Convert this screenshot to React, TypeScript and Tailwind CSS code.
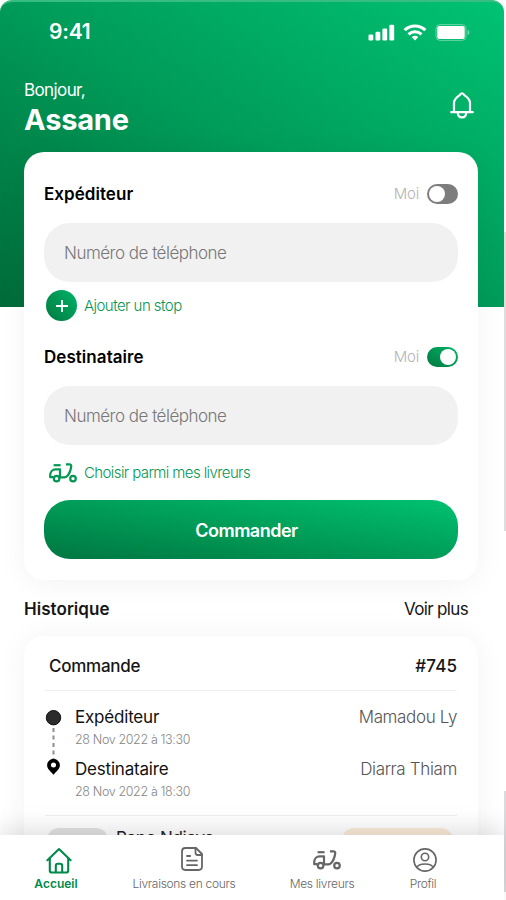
import { useState } from 'react';

type IconProps = { className?: string };

function ScooterIcon({ className }: IconProps) {
  return (
    <svg viewBox="0 0 28 20" fill="none" stroke="currentColor" strokeWidth="2.2" className={className}>
      <path d="M4.6 2.2h7" />
      <path d="M11 14.6V6.4H6.6C3.4 6.4 1.2 9 1.2 12.4v1.8h3" strokeLinejoin="round" />
      <path d="M17 1.3h3.4c1.4 0 2 .9 1.8 2.2-.5 3.4-1.8 7.2-4 9.6-.9 1-1.8 1.3-2.8 1.3H11" />
      <circle cx="7.6" cy="15.6" r="2.8" />
      <circle cx="24" cy="15.6" r="2.8" />
    </svg>
  );
}

function BellIcon({ className }: IconProps) {
  return (
    <svg viewBox="0 0 24 27" fill="none" stroke="currentColor" strokeWidth="2.2" className={className}>
      <path d="M1.2 20.2h21.6" strokeLinecap="round" />
      <path d="M4 20v-9c0-3.8 2.6-5.8 5.7-7.8.5-1.4 1.2-1.9 2.3-1.9s1.800.5 2.3 1.900C17.400 5.200 20 7.200 20 11v9" />
      <path d="M7.800 20.500c0 2.900 1.700 4.900 4.200 4.900s4.200-2 4.200-4.900" />
    </svg>
  );
}

function HomeIcon({ className }: IconProps) {
  return (
    <svg viewBox="0 0 26 27" fill="none" stroke="currentColor" strokeWidth="2.1" strokeLinecap="round" strokeLinejoin="round" className={className}>
      <path d="M1.400 13.200 13 2l11.600 11.200" />
      <path d="M3.800 11.200v12.200c0 1.300.8 2.100 2.100 2.100h14.200c1.300 0 2.100-.8 2.100-2.100V11.200" />
      <path d="M9.800 25.200v-6.400c0-1.200.8-2 2-2h2.400c1.200 0 2 .8 2 2v6.400" />
    </svg>
  );
}

function DocumentIcon({ className }: IconProps) {
  return (
    <svg viewBox="0 0 22 24" fill="none" stroke="currentColor" strokeWidth="1.8" strokeLinecap="round" strokeLinejoin="round" className={className}>
      <path d="M15 1H4.400C2.300 1 1 2.300 1 4.400v15.200C1 21.700 2.300 23 4.400 23h13.200c2.100 0 3.400-1.300 3.400-3.400V7z" />
      <path d="M14.500 1v4.800c0 1.400.8 2.200 2.200 2.200H21" />
      <path d="M6 9h3.200M6 13.600h10M6 18.200h10" />
    </svg>
  );
}

function ProfileIcon({ className }: IconProps) {
  return (
    <svg viewBox="0 0 24 24" fill="none" stroke="currentColor" strokeWidth="1.6" className={className}>
      <circle cx="12" cy="12" r="11.100" />
      <circle cx="12" cy="9" r="3.700" />
      <path d="M4.200 19.400c.6-2.300 3.600-3.400 7.800-3.400s7.200 1.100 7.800 3.400" />
    </svg>
  );
}

function StatusBar() {
  return (
    <div className="flex h-8 items-center justify-between pl-[49px] pr-[34px]">
      <span className="text-[21px] font-semibold tracking-[-0.2px]">9:41</span>
      <div className="flex items-center">
        <svg viewBox="0 0 27 17" fill="currentColor" className="h-[17px] w-[27px]">
          <rect x="0.5" y="10.5" width="4.8" height="6" rx="1.3" />
          <rect x="7.5" y="7.8" width="4.8" height="8.7" rx="1.3" />
          <rect x="14.4" y="4.5" width="4.8" height="12" rx="1.3" />
          <rect x="21.4" y="0.8" width="4.8" height="15.7" rx="1.3" />
        </svg>
        <svg viewBox="0 0 24 17" fill="none" stroke="currentColor" strokeWidth="3" className="ml-2 h-[17px] w-6">
          <path d="M1.6 6.2c5.900-5.600 14.900-5.600 20.800 0" />
          <path d="M5.500 10.300c3.700-3.500 9.300-3.500 13 0" />
          <path d="M12 16.400 8.700 13c1.800-1.700 4.800-1.700 6.600 0z" fill="currentColor" stroke="none" />
        </svg>
        <svg viewBox="0 0 35 17" className="ml-2 h-[17px] w-[35px]">
          <rect x="1" y="0.6" width="30" height="15.8" rx="4" fill="none" stroke="white" strokeOpacity="0.4" />
          <rect x="2.300" y="2" width="27.400" height="13" rx="2" fill="white" />
          <path d="M32.600 5.800v5.400c1.100-.5 1.800-1.500 1.800-2.700s-.7-2.200-1.800-2.700z" fill="white" fillOpacity="0.45" />
        </svg>
      </div>
    </div>
  );
}

function Toggle({ checked, onChange }: { checked: boolean; onChange: () => void }) {
  return (
    <button
      role="switch"
      aria-checked={checked}
      onClick={onChange}
      className={`flex h-5 w-[31px] items-center rounded-full p-[2px] ${
        checked ? 'justify-end bg-gradient-to-tr from-[#007a40] to-[#00b368]' : 'justify-start bg-[#7d7d7d]'
      }`}
    >
      <span className="size-4 rounded-full bg-white"></span>
    </button>
  );
}

interface PhoneFieldProps {
  title: string;
  me: boolean;
  onToggle: () => void;
}

function PhoneField({ title, me, onToggle }: PhoneFieldProps) {
  return (
    <div>
      <div className="flex h-[30px] items-center justify-between">
        <h2 className="pt-[2px] text-[17px] font-semibold tracking-[0.05px] text-black">{title}</h2>
        <div className="flex items-center gap-2">
          <span className="pt-[1px] text-[15px] font-light tracking-[-0.2px] text-[#b4b4b4]">Moi</span>
          <Toggle checked={me} onChange={onToggle} />
        </div>
      </div>
      <input
        type="tel"
        placeholder="Numéro de téléphone"
        className="mt-[14px] block h-[59px] w-full rounded-[26px] bg-[#f1f1f1] px-5 pt-[1px] text-[17px] font-light tracking-[-0.5px] outline-none placeholder:text-[#777777]"
      />
    </div>
  );
}

const stops = [
  { label: 'Expéditeur', name: 'Mamadou Ly', date: '28 Nov 2022 à 13:30' },
  { label: 'Destinataire', name: 'Diarra Thiam', date: '28 Nov 2022 à 18:30' },
];

function OrderCard() {
  return (
    <div className="mx-6 mt-3 w-[454px] rounded-[20px] bg-white px-[21px] shadow-[0_0_30px_rgba(0,0,0,0.05)]">
      <div className="flex h-[55px] items-center justify-between border-b border-[#efefef] pl-1 pt-[7px] text-[17px] font-medium tracking-[-0.25px] text-[#161616]">
        <span>Commande</span>
        <span className="tracking-[0.1px]">#745</span>
      </div>
      <div className="flex h-[125px] border-b border-[#efefef] pt-[13px]">
        <svg viewBox="0 0 18 76" className="mt-1 h-[76px] w-[18px] shrink-0">
          <circle cx="8.500" cy="9.700" r="7.200" fill="#2b2b2b" stroke="#111111" />
          <path d="M8.500 20v31" stroke="#8d8d8d" strokeWidth="2" strokeDasharray="4 3.500" />
          <path
            d="M8.500 51c-3.600 0-6.400 2.700-6.400 6.200 0 3.900 4.100 6.400 6.400 9.600 2.300-3.200 6.400-5.700 6.400-9.600 0-3.500-2.800-6.200-6.400-6.200zm0 3.500a2.500 2.500 0 1 1 0 5 2.500 2.500 0 0 1 0-5z"
            fill="black"
            fillRule="evenodd"
          />
        </svg>
        <div className="ml-3 flex-1">
          {stops.map(stop => (
            <div key={stop.label} className="h-[52px]">
              <div className="flex h-[27px] items-center justify-between text-[17px] tracking-[-0.2px]">
                <span className="text-[#111111]">{stop.label}</span>
                <span className="font-light tracking-[-0.35px] text-[#555555]">{stop.name}</span>
              </div>
              <div className="flex h-[18px] items-center text-[12.5px] font-light tracking-[-0.36px] text-[#858585]">{stop.date}</div>
            </div>
          ))}
        </div>
      </div>
      <div className="flex h-20 items-start pl-[2px] pr-1 pt-3">
        <div className="h-9 w-[61px] rounded-xl bg-[#e3e3e3]"></div>
        <span className="ml-2 text-[17px] leading-5 tracking-[-0.3px] text-[#222222]">Pape Ndiaye</span>
        <div className="ml-auto h-9 w-[111px] rounded-xl bg-[#fcebda]"></div>
      </div>
    </div>
  );
}

function BottomNav() {
  return (
    <nav className="relative flex h-[65px] items-start bg-white pt-3 text-[12px] font-light tracking-[-0.3px] text-[#666666] shadow-[0_-6px_24px_rgba(0,0,0,0.13)]">
      <button className="flex w-[112px] flex-col items-center text-[#008a49]">
        <HomeIcon className="ml-[5px] h-[27px] w-[26px]" />
        <span className="mt-[2px] font-semibold leading-4 tracking-[0px]">Accueil</span>
      </button>
      <button className="flex w-36 flex-col items-center">
        <DocumentIcon className="ml-4 h-6 w-[22px]" />
        <span className="mt-[5px] leading-4">Livraisons en cours</span>
      </button>
      <button className="flex w-[132px] flex-col items-center">
        <ScooterIcon className="ml-[10px] mt-[3px] h-5 w-7" />
        <span className="mt-[6px] leading-4">Mes livreurs</span>
      </button>
      <button className="flex w-[70px] flex-col items-center">
        <ProfileIcon className="ml-[3px] mt-[1px] size-6" />
        <span className="mt-1 leading-4">Profil</span>
      </button>
    </nav>
  );
}

export default function App() {
  const [senderIsMe, setSenderIsMe] = useState(false);
  const [recipientIsMe, setRecipientIsMe] = useState(true);

  return (
    <div className="flex h-[900px] w-[506px] overflow-hidden bg-white font-[Inter,sans-serif]">
      <div className="w-[504px]">
        <main className="h-[835px] overflow-hidden">
          <header className="h-[307px] rounded-t-xl border-t-2 border-[#36bd82] bg-[linear-gradient(32deg,#006b38_0%,#009b59_50%,#00c272_100%)] pt-[14px] text-white">
            <StatusBar />
            <div className="flex items-center justify-between pl-6 pr-[30px] pt-[30px]">
              <div>
                <p className="text-[17px] leading-6 tracking-[-0.6px]">Bonjour,</p>
                <h1 className="text-[29px] font-bold leading-[35px] tracking-[-0.2px]">Assane</h1>
              </div>
              <BellIcon className="mt-[-5px] h-[27px] w-6" />
            </div>
          </header>

          <section className="relative mx-6 mt-[-155px] h-[428px] w-[454px] rounded-[20px] bg-white px-5 pt-[27px] shadow-[0_4px_30px_rgba(0,0,0,0.05)]">
            <PhoneField title="Expéditeur" me={senderIsMe} onToggle={() => setSenderIsMe(!senderIsMe)} />
            <button className="mt-2 flex h-[31px] items-center pl-[2px] text-[#069653]">
              <span className="flex size-[31px] items-center justify-center rounded-full bg-gradient-to-tr from-[#007a40] to-[#00b368]">
                <svg viewBox="0 0 12 12" stroke="white" strokeWidth="1.8" className="size-3">
                  <path d="M6 0v12M0 6h12" />
                </svg>
              </span>
              <span className="ml-[7px] pt-[1px] text-[15px] font-light tracking-[-0.55px]">Ajouter un stop</span>
            </button>
            <div className="mt-[21px]">
              <PhoneField title="Destinataire" me={recipientIsMe} onToggle={() => setRecipientIsMe(!recipientIsMe)} />
            </div>
            <button className="mt-[13px] flex h-[30px] items-center pl-[5px] text-[#069653]">
              <ScooterIcon className="h-5 w-7" />
              <span className="ml-[7px] pt-[1px] text-[15px] font-light tracking-[-0.6px]">Choisir parmi mes livreurs</span>
            </button>
            <button className="mt-3 h-[59px] w-full rounded-[26px] bg-[linear-gradient(to_top_right,#007640_0%,#009b57_48%,#00c270_100%)] pr-[9px] pt-[2px] text-[18px] font-semibold tracking-[-0.5px] text-white">
              Commander
            </button>
          </section>

          <div className="mt-[14px] flex h-[30px] items-center justify-between pl-6 pr-9 pt-[2px] text-[17px] text-[#161616]">
            <h2 className="font-semibold tracking-[0.05px]">Historique</h2>
            <button className="tracking-[-0.65px]">Voir plus</button>
          </div>
          <OrderCard />
        </main>
        <BottomNav />
      </div>
      {/* edges of the neighbouring panels */}
      <div className="w-[2px] shrink-0 pt-[232px]">
        <div className="h-[299px] bg-[#dedede]"></div>
        <div className="mt-[260px] h-[101px] bg-[#d9dbdf]"></div>
      </div>
    </div>
  );
}
